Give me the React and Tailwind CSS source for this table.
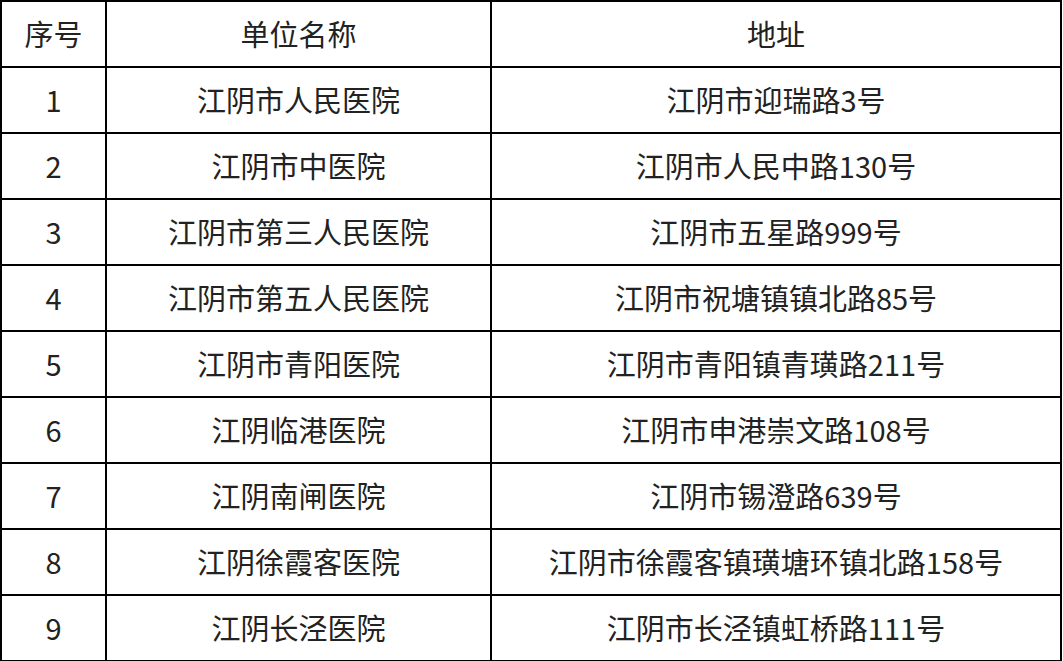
const ROWS = [
  ["1", "江阴市人民医院", "江阴市迎瑞路3号"],
  ["2", "江阴市中医院", "江阴市人民中路130号"],
  ["3", "江阴市第三人民医院", "江阴市五星路999号"],
  ["4", "江阴市第五人民医院", "江阴市祝塘镇镇北路85号"],
  ["5", "江阴市青阳医院", "江阴市青阳镇青璜路211号"],
  ["6", "江阴临港医院", "江阴市申港崇文路108号"],
  ["7", "江阴南闸医院", "江阴市锡澄路639号"],
  ["8", "江阴徐霞客医院", "江阴市徐霞客镇璜塘环镇北路158号"],
  ["9", "江阴长泾医院", "江阴市长泾镇虹桥路111号"],
];

export default function App() {
  return (
    <div className="w-[1063px] h-[661px] bg-white">
      <table
        className="w-[1062px] table-fixed border-collapse text-[29px] text-[#222]"
        style={{ fontFamily: '"Noto Sans CJK SC", "Noto Sans", sans-serif' }}
      >
        <colgroup>
          <col className="w-[105px]" />
          <col className="w-[385px]" />
          <col />
        </colgroup>
        <thead>
          <tr className="h-[66px]">
            <th className="border-2 border-black font-normal text-center">序号</th>
            <th className="border-2 border-black font-normal text-center">单位名称</th>
            <th className="border-2 border-black font-normal text-center">地址</th>
          </tr>
        </thead>
        <tbody>
          {ROWS.map((r) => (
            <tr key={r[0]} className="h-[66px]">
              <td className="border-2 border-black text-center">{r[0]}</td>
              <td className="border-2 border-black text-center">{r[1]}</td>
              <td className="border-2 border-black text-center">{r[2]}</td>
            </tr>
          ))}
        </tbody>
      </table>
    </div>
  );
}
